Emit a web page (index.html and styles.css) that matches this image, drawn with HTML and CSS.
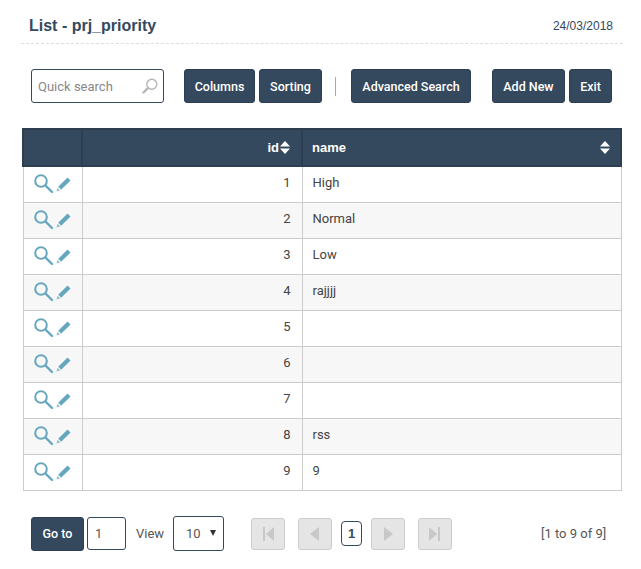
FILE: index.html
```html
<!DOCTYPE html>
<html lang="en">
<head>
<meta charset="utf-8">
<title>List - prj_priority</title>
<link rel="stylesheet" href="styles.css">
</head>
<body>
<svg class="defs" width="0" height="0" aria-hidden="true">
  <symbol id="view" viewBox="0 0 20 20">
    <circle cx="7" cy="7" r="5.800" fill="none" stroke="currentColor" stroke-width="2"/>
    <path d="M11.500 11.500l6.500 6.500" fill="none" stroke="currentColor" stroke-width="2.400" stroke-linecap="round"/>
  </symbol>
  <symbol id="edit" viewBox="0 0 15 15">
    <path d="M11.500 .5l3 3-9.300 9.300-3-3z" fill="currentColor"/>
    <path d="M1.500 10.800l2.700 2.700-3.700 1z" fill="currentColor" opacity=".7"/>
  </symbol>
  <symbol id="sort" viewBox="0 0 10 13">
    <path d="M5 0l5 5.500H0zM5 13L0 7.500h10z" fill="currentColor"/>
  </symbol>
</svg>
<header class="top">
  <h1 class="title">List - prj_priority</h1>
  <span class="date">24/03/2018</span>
</header>
<div class="toolbar">
  <label class="search">
    <input class="search-input" type="text" placeholder="Quick search">
    <svg class="search-icon" viewBox="0 0 16 16" width="16" height="16">
      <circle cx="9.800" cy="6.200" r="5" fill="none" stroke="#b5b5b5" stroke-width="1.400"/>
      <path d="M6 10l-4.500 4.500" stroke="#b5b5b5" stroke-width="2.400" stroke-linecap="round"/>
    </svg>
  </label>
  <div class="group group-a">
    <button class="btn btn-columns">Columns</button>
    <button class="btn btn-sorting">Sorting</button>
  </div>
  <span class="sep"></span>
  <button class="btn btn-adv">Advanced Search</button>
  <div class="group group-b">
    <button class="btn btn-add">Add New</button>
    <button class="btn btn-exit">Exit</button>
  </div>
</div>
<table class="grid">
  <thead>
    <tr>
      <th class="c-act"></th>
      <th class="c-id"><span class="th-in th-right">id<svg class="sort"><use href="#sort"/></svg></span></th>
      <th class="c-name"><span class="th-in th-between">name<svg class="sort"><use href="#sort"/></svg></span></th>
    </tr>
  </thead>
  <tbody>
    <tr><td class="c-act"><span class="acts"><svg class="i-view"><use href="#view"/></svg><svg class="i-edit"><use href="#edit"/></svg></span></td><td class="c-id">1</td><td class="c-name">High</td></tr>
    <tr><td class="c-act"><span class="acts"><svg class="i-view"><use href="#view"/></svg><svg class="i-edit"><use href="#edit"/></svg></span></td><td class="c-id">2</td><td class="c-name">Normal</td></tr>
    <tr><td class="c-act"><span class="acts"><svg class="i-view"><use href="#view"/></svg><svg class="i-edit"><use href="#edit"/></svg></span></td><td class="c-id">3</td><td class="c-name">Low</td></tr>
    <tr><td class="c-act"><span class="acts"><svg class="i-view"><use href="#view"/></svg><svg class="i-edit"><use href="#edit"/></svg></span></td><td class="c-id">4</td><td class="c-name">rajjjj</td></tr>
    <tr><td class="c-act"><span class="acts"><svg class="i-view"><use href="#view"/></svg><svg class="i-edit"><use href="#edit"/></svg></span></td><td class="c-id">5</td><td class="c-name"></td></tr>
    <tr><td class="c-act"><span class="acts"><svg class="i-view"><use href="#view"/></svg><svg class="i-edit"><use href="#edit"/></svg></span></td><td class="c-id">6</td><td class="c-name"></td></tr>
    <tr><td class="c-act"><span class="acts"><svg class="i-view"><use href="#view"/></svg><svg class="i-edit"><use href="#edit"/></svg></span></td><td class="c-id">7</td><td class="c-name"></td></tr>
    <tr><td class="c-act"><span class="acts"><svg class="i-view"><use href="#view"/></svg><svg class="i-edit"><use href="#edit"/></svg></span></td><td class="c-id">8</td><td class="c-name">rss</td></tr>
    <tr><td class="c-act"><span class="acts"><svg class="i-view"><use href="#view"/></svg><svg class="i-edit"><use href="#edit"/></svg></span></td><td class="c-id">9</td><td class="c-name">9</td></tr>
  </tbody>
</table>
<footer class="pager">
  <button class="btn btn-goto">Go to</button>
  <input class="goto-input" type="text" value="1">
  <span class="view-label">View</span>
  <span class="select"><span>10</span><i class="select-arrow"></i></span>
  <nav class="pages">
    <span class="pg pg-first"><svg viewBox="0 0 14 16" width="14" height="16"><path d="M2 1h2v14H2zM13 1v14L5 8z"/></svg></span>
    <span class="pg pg-prev"><svg viewBox="0 0 14 16" width="14" height="16"><path d="M11 1v14L2 8z"/></svg></span>
    <span class="pg-current">1</span>
    <span class="pg pg-next"><svg viewBox="0 0 14 16" width="14" height="16"><path d="M3 1v14l9-7z"/></svg></span>
    <span class="pg pg-last"><svg viewBox="0 0 14 16" width="14" height="16"><path d="M1 1v14l8-7zM10 1h2v14h-2z"/></svg></span>
  </nav>
  <span class="count">[1 to 9 of 9]</span>
</footer>
</body>
</html>
```
FILE: styles.css
```css
* { box-sizing: border-box; }
html, body { margin: 0; padding: 0; }
body {
  width: 641px;
  height: 569px;
  overflow: hidden;
  background: #fff;
  font-family: Roboto, "Open Sans", "Liberation Sans", sans-serif;
  font-size: 13px;
  color: #444;
}
.defs { position: absolute; }
.top {
  display: flex;
  justify-content: space-between;
  align-items: center;
  margin: 0 18px 0 21px;
  padding: 15px 10px 6px 8px;
  height: 44px;
  border-bottom: 1px dashed #ddd;
}
.title {
  margin: 0;
  font: bold 16px "Liberation Sans", Arial, sans-serif;
  color: #34495e;
}
.date {
  font: 12px "Liberation Sans", Arial, sans-serif;
  color: #34495e;
}
.toolbar {
  display: flex;
  align-items: center;
  height: 34px;
  margin: 25px 0 0 31px;
}
.search {
  position: relative;
  display: block;
  width: 133px;
  height: 34px;
}
.search-input {
  width: 100%;
  height: 100%;
  padding: 0 28px 0 6px;
  border: 1px solid #34495e;
  border-radius: 3px;
  outline: 0;
  background: #fff;
  font: 13px Roboto, sans-serif;
  color: #555;
}
.search-input::placeholder { color: #888; opacity: 1; }
.search-icon { position: absolute; right: 6px; top: 9px; }
.group { display: flex; gap: 4px; }
.group-a { margin-left: 20px; }
.group-b { margin-left: 21px; }
.btn {
  height: 34px;
  padding: 0;
  border: 1px solid #2c3e50;
  border-radius: 3px;
  background: #34495e;
  color: #fff;
  font: 500 12.500px Roboto, sans-serif;
}
.btn-columns { width: 71px; }
.btn-sorting { width: 63px; }
.btn-adv { width: 120px; }
.btn-add { width: 73px; }
.btn-exit { width: 43px; }
.sep {
  width: 1px;
  height: 19px;
  margin: 0 15px 0 13px;
  background: #aaa;
}
.grid {
  table-layout: fixed;
  width: 600px;
  margin: 25px 0 0 22px;
  border-collapse: collapse;
}
.grid th {
  height: 37px;
  padding: 0 10px 0 9px;
  background: #34495e;
  border: 2px solid #2c3e50;
  color: #fff;
  font: bold 13px "Liberation Sans", sans-serif;
  text-align: left;
}
.grid td {
  height: 36px;
  padding: 0 10px 3px;
  border: 1px solid #ccc;
  color: #444;
  font: 13px Roboto, sans-serif;
}
.grid tbody tr:nth-child(even) td { background: #f7f7f7; }
.grid th.c-act, .grid td.c-act { width: 59px; padding: 0; }
.grid th.c-id, .grid td.c-id { width: 220px; text-align: right; padding-right: 11px; }
.th-in { display: flex; align-items: center; gap: 1px; }
.th-right { justify-content: flex-end; }
.th-between { justify-content: space-between; }
.sort { width: 10px; height: 13px; color: #fff; }
.acts { display: flex; align-items: center; padding-left: 10px; gap: 2px; color: #65a7bf; }
.i-view { width: 20px; height: 20px; }
.i-edit { width: 15px; height: 15px; }
.pager {
  display: flex;
  align-items: center;
  height: 36px;
  margin: 25px 0 0 31px;
  color: #555;
  font: 13px Roboto, sans-serif;
}
.btn-goto { width: 53px; flex: none; }
.goto-input {
  width: 39px;
  height: 33px;
  margin-left: 3px;
  padding: 0 7px;
  border: 1px solid #34495e;
  border-radius: 3px;
  outline: 0;
  font: 13px Roboto, sans-serif;
  color: #555;
}
.view-label { margin-left: 10px; width: 37px; }
.select {
  display: flex;
  align-items: center;
  justify-content: space-between;
  width: 51px;
  height: 35px;
  padding: 0 7px 0 12px;
  border: 1px solid #34495e;
  border-radius: 3px;
}
.select-arrow {
  width: 0;
  height: 0;
  margin-bottom: 2px;
  border: 3.500px solid transparent;
  border-top: 6px solid #333;
  border-bottom: 0;
}
.pages { display: flex; align-items: center; margin-left: 27px; }
.pg {
  display: flex;
  align-items: center;
  justify-content: center;
  width: 34px;
  height: 32px;
  border: 1px solid #ccc;
  border-radius: 3px;
  background: #e5e5e5;
  fill: #c8c8c8;
}
.pg-first { margin-right: 13px; }
.pg-next { margin-left: 9px; margin-right: 13px; }
.pg-current {
  width: 21px;
  height: 25px;
  margin-left: 9px;
  border: 1px solid #34495e;
  border-radius: 4px;
  color: #34495e;
  font: bold 13px/23px "Liberation Sans", sans-serif;
  text-align: center;
}
.count { margin-left: 89px; }
```
